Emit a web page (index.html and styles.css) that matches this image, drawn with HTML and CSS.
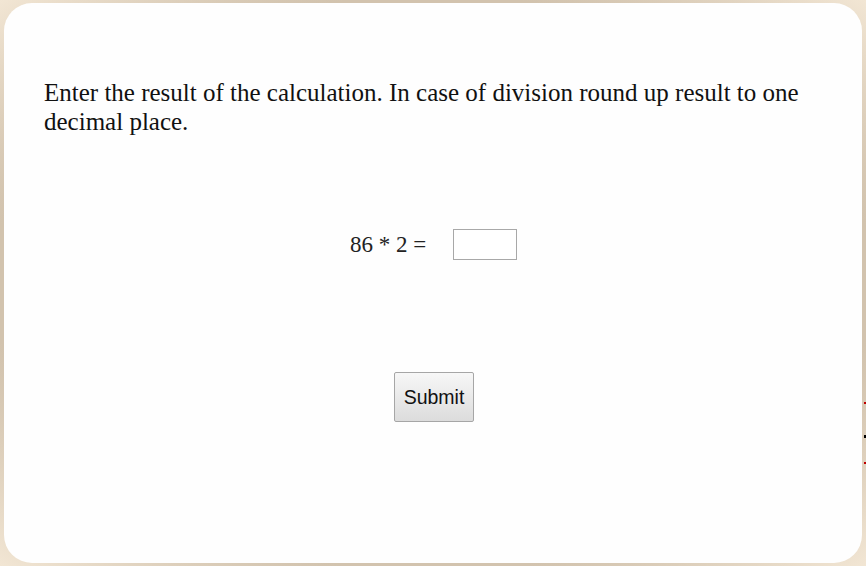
FILE: index.html
```html
<!DOCTYPE html>
<html>
<head>
<meta charset="utf-8">
<link rel="stylesheet" href="styles.css">
</head>
<body>
<div class="card">
  <p class="prompt">Enter the result of the calculation. In case of division round up result to one decimal place.</p>
  <div class="task">
    <span class="expr">86 * 2 =</span>
    <input class="answer" type="text">
  </div>
  <div class="actions">
    <button class="submit" type="button">Submit</button>
  </div>
</div>
<span class="mark mark-red mark-a"></span>
<span class="mark mark-black mark-b"></span>
<span class="mark mark-red mark-c"></span>
</body>
</html>
```

FILE: styles.css
```css
html, body {
  margin: 0;
  padding: 0;
  width: 866px;
  height: 566px;
  overflow: hidden;
}
body {
  background: radial-gradient(ellipse at center, #d2c3ae 72%, #f2e6d4 100%);
  background-color: #d4c5b1;
  padding: 3px 4px 3px 4px;
  box-sizing: border-box;
  position: relative;
  font-family: "Liberation Serif", "Times New Roman", serif;
}
.card {
  background: #fefefe;
  border-radius: 28px;
  height: 560px;
  box-sizing: border-box;
  padding: 75px 40px 0 40px;
  display: flex;
  flex-direction: column;
}
.prompt {
  margin: 0;
  font-size: 25px;
  line-height: 29px;
  color: #111;
}
.task {
  display: flex;
  align-items: center;
  justify-content: center;
  margin-top: 93px;
  gap: 27px;
  padding-left: 1px;
}
.expr {
  font-size: 23px;
  color: #222;
}
.answer {
  width: 64px;
  height: 31px;
  box-sizing: border-box;
  border: 1px solid #a8a8a8;
  background: #fff;
  margin: 0;
  padding: 0;
}
.actions {
  display: flex;
  justify-content: center;
  margin-top: 112px;
  padding-left: 2px;
}
.submit {
  width: 80px;
  height: 50px;
  font-family: "Liberation Sans", Arial, sans-serif;
  font-size: 19.5px;
  color: #111;
  border: 1px solid #a6a6a6;
  border-radius: 2px;
  background: linear-gradient(#f7f7f7, #dcdcdc);
  padding: 0;
}
.mark {
  position: absolute;
  right: 0;
  width: 2px;
  height: 2px;
}
.mark-red { background: #c00000; }
.mark-black { background: #000; height: 3px; }
.mark-a { top: 402px; }
.mark-b { top: 435px; }
.mark-c { top: 462px; }
```
